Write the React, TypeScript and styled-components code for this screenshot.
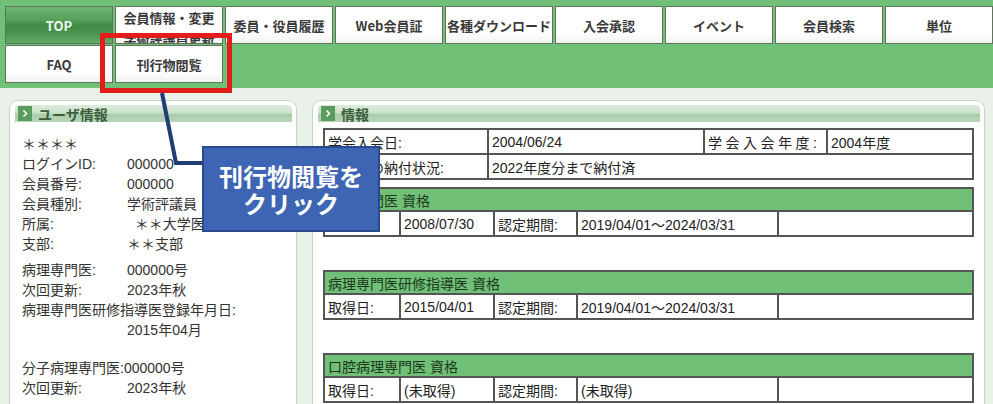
import React from "react";
import styled, { createGlobalStyle } from "styled-components";

// Member top page with the "刊行物閲覧" annotation

const GlobalStyle = createGlobalStyle`
  html, body { margin: 0; padding: 0; width: 993px; height: 404px; overflow: hidden; background: #e9f1e9; }
  body { font-family: "Liberation Sans", "Noto Sans CJK JP", sans-serif; font-size: 14px; color: #333; }
`;

const Page = styled.div`
  position: relative; width: 993px; height: 404px; overflow: hidden;
`;

const Nav = styled.nav`
  height: 88px; box-sizing: border-box; background: #70c077;
  padding: 6px 0 0 5px;
  display: flex; flex-direction: column; gap: 1px;
`;

const NavRow = styled.div`
  display: flex; gap: 2px;
`;

const NavButton = styled.div<{ $active?: boolean; $stacked?: boolean }>`
  width: 108px; height: 38px; box-sizing: border-box; flex: none;
  border: 1px solid #5f735f;
  background: ${({ $active }) => $active
    ? "linear-gradient(to bottom, #6cb670 0%, #55a05a 35%, #3f8845 52%, #4d9652 75%, #63ad67 100%)"
    : "linear-gradient(to bottom, #ffffff 0%, #ffffff 70%, #f0f2f0 100%)"};
  color: ${({ $active }) => $active ? "#eef8ee" : "#3a3a3a"};
  font-family: "Noto Sans CJK JP", sans-serif; font-weight: bold; font-size: 13px;
  display: flex; flex-direction: column; align-items: center;
  justify-content: ${({ $stacked }) => $stacked ? "flex-start" : "center"};
  line-height: ${({ $stacked }) => $stacked ? "21px" : "normal"};
  overflow: hidden; white-space: nowrap;
`;

const Main = styled.div`
  display: flex; gap: 15px; padding: 12px 0 0 9px;
`;

const Panel = styled.section<{ $width: number }>`
  width: ${({ $width }) => $width}px; height: 320px; flex: none; box-sizing: border-box;
  background: #fff; border: 1px solid #c6d6c6; border-bottom: none;
  border-radius: 9px 9px 0 0;
  padding: 4px 4px 0 5px;
`;

const PanelHead = styled.div`
  height: 17px; display: flex; align-items: center; gap: 6px;
  padding-left: 3px; border-radius: 4px 4px 0 0;
  background: linear-gradient(to bottom, #dcecdc 0%, #c9e0c9 48%, #a9cdaa 56%, #b8d6b9 100%);
  font-family: "Noto Sans CJK JP", sans-serif; font-weight: bold; font-size: 14px; color: #3d5f3d;
`;

const HeadIcon = styled.span`
  width: 14px; height: 15px; flex: none; background: #5a9b5e;
  display: flex; align-items: center; justify-content: center;
`;

const InfoList = styled.div`
  padding: 12px 0 0 7px; line-height: 20px; color: #333; white-space: pre;
`;

const InfoRow = styled.div<{ $gap?: number }>`
  display: flex; margin-top: ${({ $gap }) => $gap ?? 0}px;
`;

const InfoLabel = styled.span`
  width: 105px; flex: none;
`;

const Tables = styled.div`
  padding: 6px 0 0 5px;
`;

const InfoTable = styled.table<{ $gap?: number }>`
  width: 649px; border-collapse: collapse; table-layout: fixed;
  margin-top: ${({ $gap }) => $gap ?? 0}px;
  color: #222; font-size: 14px;
  td {
    border: 2px solid #555; height: 23px; padding: 0 3px;
    white-space: nowrap; overflow: hidden; background: #fff;
  }
`;

const HeadCell = styled.td`
  && { background: #70c077; color: #1d381d; height: 21px; }
`;

const WideLabel = styled.span`
  letter-spacing: 3.5px;
`;

const Highlight = styled.div`
  position: absolute; left: 100px; top: 33px; width: 132px; height: 60px;
  box-sizing: border-box; border: 5px solid #e31c1c;
`;

const Connector = styled.svg`
  position: absolute; left: 0; top: 0; pointer-events: none;
`;

const Callout = styled.div`
  position: absolute; left: 202px; top: 146px; width: 178px; height: 86px;
  box-sizing: border-box; background: #3d65b4; border: 2px solid #2a4a8b;
  display: flex; flex-direction: column; align-items: center; justify-content: center;
  color: #fff; font-family: "Noto Sans CJK JP", sans-serif; font-weight: bold;
  font-size: 24px; line-height: 27px;
`;

const navTop = ["会員情報・変更", "委員・役員履歴", "Web会員証", "各種ダウンロード", "入会承認", "イベント", "会員検索", "単位"];

const userRows: { label?: string; value: string; gap?: number }[] = [
  { label: "ログインID:", value: "000000" },
  { label: "会員番号:", value: "000000" },
  { label: "会員種別:", value: "学術評議員" },
  { label: "所属:", value: "  ＊＊大学医学部" },
  { label: "支部:", value: "＊＊支部" },
  { label: "病理専門医:", value: "000000号", gap: 6 },
  { label: "次回更新:", value: "2023年秋" },
];

const quals = [
  { title: "病理専門医 資格", got: "2008/07/30", period: "2019/04/01～2024/03/31", gap: 7 },
  { title: "病理専門医研修指導医 資格", got: "2015/04/01", period: "2019/04/01～2024/03/31", gap: 33 },
  { title: "口腔病理専門医 資格", got: "(未取得)", period: "(未取得)", gap: 33 },
];

const Chevron = () => (
  <svg width="8" height="9" viewBox="0 0 8 9" aria-hidden>
    <path d="M2.5 1.5 L5.5 4.5 L2.5 7.5" stroke="#fff" strokeWidth="1.6" fill="none" />
  </svg>
);

export default function App() {
  return (
    <Page>
      <GlobalStyle />
      <Nav>
        <NavRow>
          <NavButton $active>TOP</NavButton>
          {navTop.map((t, i) => i === 0 ? (
            <NavButton key={t} $stacked><span>{t}</span><span>学術評議員更新</span></NavButton>
          ) : (
            <NavButton key={t}>{t}</NavButton>
          ))}
        </NavRow>
        <NavRow>
          <NavButton>FAQ</NavButton>
          <NavButton>刊行物閲覧</NavButton>
        </NavRow>
      </Nav>

      <Main>
        <Panel $width={288}>
          <PanelHead><HeadIcon><Chevron /></HeadIcon>ユーザ情報</PanelHead>
          <InfoList>
            <InfoRow>＊＊＊＊</InfoRow>
            {userRows.map((r) => (
              <InfoRow key={r.label} $gap={r.gap}><InfoLabel>{r.label}</InfoLabel><span>{r.value}</span></InfoRow>
            ))}
            <InfoRow>病理専門医研修指導医登録年月日:</InfoRow>
            <InfoRow><InfoLabel /><span>2015年04月</span></InfoRow>
            <InfoRow $gap={18}>分子病理専門医:000000号</InfoRow>
            <InfoRow><InfoLabel>次回更新:</InfoLabel><span>2023年秋</span></InfoRow>
          </InfoList>
        </Panel>

        <Panel $width={673}>
          <PanelHead><HeadIcon><Chevron /></HeadIcon>情報</PanelHead>
          <Tables>
            <InfoTable>
              <colgroup><col style={{ width: 164 }} /><col style={{ width: 216 }} /><col style={{ width: 123 }} /><col style={{ width: 146 }} /></colgroup>
              <tbody>
                <tr><td>学会入会日:</td><td>2004/06/24</td><td><WideLabel>学会入会年度:</WideLabel></td><td>2004年度</td></tr>
                <tr><td>年会費の納付状況:</td><td colSpan={3}>2022年度分まで納付済</td></tr>
              </tbody>
            </InfoTable>
            {quals.map((q) => (
              <InfoTable key={q.title} $gap={q.gap}>
                <colgroup><col style={{ width: 76 }} /><col style={{ width: 94 }} /><col style={{ width: 83 }} /><col style={{ width: 201 }} /><col style={{ width: 195 }} /></colgroup>
                <tbody>
                  <tr><HeadCell colSpan={5}>{q.title}</HeadCell></tr>
                  <tr><td>取得日:</td><td>{q.got}</td><td>認定期間:</td><td>{q.period}</td><td /></tr>
                </tbody>
              </InfoTable>
            ))}
          </Tables>
        </Panel>
      </Main>

      <Highlight />
      <Connector width="993" height="404" viewBox="0 0 993 404">
        <polyline points="162,93 176,163 204,163" fill="none" stroke="#1f3d74" strokeWidth="4" strokeLinejoin="miter" />
      </Connector>
      <Callout>
        <span>刊行物閲覧を</span>
        <span>クリック</span>
      </Callout>
    </Page>
  );
}
